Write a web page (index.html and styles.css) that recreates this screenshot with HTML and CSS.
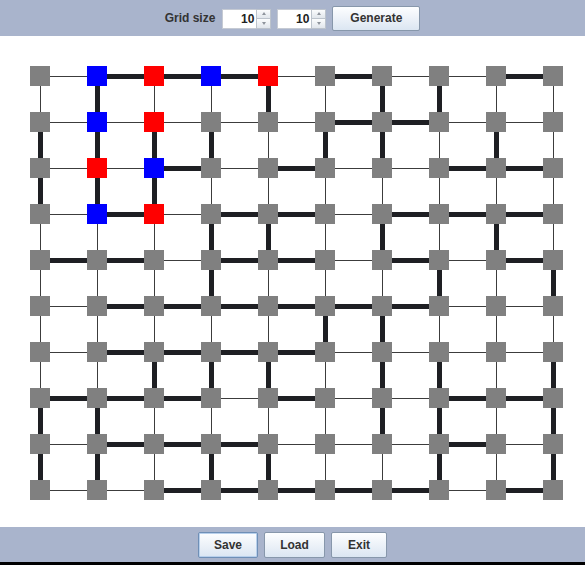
FILE: index.html
```html
<!DOCTYPE html>
<html>
<head>
<meta charset="utf-8">
<link rel="stylesheet" href="styles.css">
</head>
<body>
<div class="app">
  <header class="bar top">
    <span class="label">Grid size</span>
    <div class="spinner">
      <span class="field">10</span>
      <span class="arrows"><span class="arrow up"></span><span class="arrow down"></span></span>
    </div>
    <div class="spinner">
      <span class="field">10</span>
      <span class="arrows"><span class="arrow up"></span><span class="arrow down"></span></span>
    </div>
    <button class="btn btn-generate">Generate</button>
  </header>
  <main class="canvas">
    <svg class="grid" width="585" height="491" viewBox="0 0 585 491">
      <g transform="translate(0.5,0.5)">
        <path class="thin" d="M40 40H553M40 86H553M40 132H553M40 178H553M40 224H553M40 270H553M40 316H553M40 362H553M40 408H553M40 454H553M40 40V454M97 40V454M154 40V454M211 40V454M268 40V454M325 40V454M382 40V454M439 40V454M496 40V454M553 40V454"/>
        <path class="thick" d="M97 40H268M325 40H382M496 40H553M325 86H439M154 132H211M268 132H325M439 132H553M97 178H154M211 178H325M382 178H553M40 224H154M211 224H325M382 224H439M496 224H553M97 270H439M97 316H325M40 362H211M268 362H325M439 362H553M97 408H268M439 408H496M154 454H439M496 454H553M40 86V178M40 362V454M97 40V178M97 362V454M154 86V178M154 316V362M211 86V132M211 178V270M211 316V362M211 408V454M268 40V86M268 178V224M268 316V362M268 408V454M325 86V132M325 270V316M382 40V132M382 178V224M382 270V408M439 40V86M439 224V270M439 316V454M496 86V132M496 178V224M553 224V270M553 316V454"/>
      </g>
      <g class="nodes">
        <rect x="30" y="30" width="20" height="20"/><rect class="blue" x="87" y="30" width="20" height="20"/><rect class="red" x="144" y="30" width="20" height="20"/><rect class="blue" x="201" y="30" width="20" height="20"/><rect class="red" x="258" y="30" width="20" height="20"/><rect x="315" y="30" width="20" height="20"/><rect x="372" y="30" width="20" height="20"/><rect x="429" y="30" width="20" height="20"/><rect x="486" y="30" width="20" height="20"/><rect x="543" y="30" width="20" height="20"/>
        <rect x="30" y="76" width="20" height="20"/><rect class="blue" x="87" y="76" width="20" height="20"/><rect class="red" x="144" y="76" width="20" height="20"/><rect x="201" y="76" width="20" height="20"/><rect x="258" y="76" width="20" height="20"/><rect x="315" y="76" width="20" height="20"/><rect x="372" y="76" width="20" height="20"/><rect x="429" y="76" width="20" height="20"/><rect x="486" y="76" width="20" height="20"/><rect x="543" y="76" width="20" height="20"/>
        <rect x="30" y="122" width="20" height="20"/><rect class="red" x="87" y="122" width="20" height="20"/><rect class="blue" x="144" y="122" width="20" height="20"/><rect x="201" y="122" width="20" height="20"/><rect x="258" y="122" width="20" height="20"/><rect x="315" y="122" width="20" height="20"/><rect x="372" y="122" width="20" height="20"/><rect x="429" y="122" width="20" height="20"/><rect x="486" y="122" width="20" height="20"/><rect x="543" y="122" width="20" height="20"/>
        <rect x="30" y="168" width="20" height="20"/><rect class="blue" x="87" y="168" width="20" height="20"/><rect class="red" x="144" y="168" width="20" height="20"/><rect x="201" y="168" width="20" height="20"/><rect x="258" y="168" width="20" height="20"/><rect x="315" y="168" width="20" height="20"/><rect x="372" y="168" width="20" height="20"/><rect x="429" y="168" width="20" height="20"/><rect x="486" y="168" width="20" height="20"/><rect x="543" y="168" width="20" height="20"/>
        <rect x="30" y="214" width="20" height="20"/><rect x="87" y="214" width="20" height="20"/><rect x="144" y="214" width="20" height="20"/><rect x="201" y="214" width="20" height="20"/><rect x="258" y="214" width="20" height="20"/><rect x="315" y="214" width="20" height="20"/><rect x="372" y="214" width="20" height="20"/><rect x="429" y="214" width="20" height="20"/><rect x="486" y="214" width="20" height="20"/><rect x="543" y="214" width="20" height="20"/>
        <rect x="30" y="260" width="20" height="20"/><rect x="87" y="260" width="20" height="20"/><rect x="144" y="260" width="20" height="20"/><rect x="201" y="260" width="20" height="20"/><rect x="258" y="260" width="20" height="20"/><rect x="315" y="260" width="20" height="20"/><rect x="372" y="260" width="20" height="20"/><rect x="429" y="260" width="20" height="20"/><rect x="486" y="260" width="20" height="20"/><rect x="543" y="260" width="20" height="20"/>
        <rect x="30" y="306" width="20" height="20"/><rect x="87" y="306" width="20" height="20"/><rect x="144" y="306" width="20" height="20"/><rect x="201" y="306" width="20" height="20"/><rect x="258" y="306" width="20" height="20"/><rect x="315" y="306" width="20" height="20"/><rect x="372" y="306" width="20" height="20"/><rect x="429" y="306" width="20" height="20"/><rect x="486" y="306" width="20" height="20"/><rect x="543" y="306" width="20" height="20"/>
        <rect x="30" y="352" width="20" height="20"/><rect x="87" y="352" width="20" height="20"/><rect x="144" y="352" width="20" height="20"/><rect x="201" y="352" width="20" height="20"/><rect x="258" y="352" width="20" height="20"/><rect x="315" y="352" width="20" height="20"/><rect x="372" y="352" width="20" height="20"/><rect x="429" y="352" width="20" height="20"/><rect x="486" y="352" width="20" height="20"/><rect x="543" y="352" width="20" height="20"/>
        <rect x="30" y="398" width="20" height="20"/><rect x="87" y="398" width="20" height="20"/><rect x="144" y="398" width="20" height="20"/><rect x="201" y="398" width="20" height="20"/><rect x="258" y="398" width="20" height="20"/><rect x="315" y="398" width="20" height="20"/><rect x="372" y="398" width="20" height="20"/><rect x="429" y="398" width="20" height="20"/><rect x="486" y="398" width="20" height="20"/><rect x="543" y="398" width="20" height="20"/>
        <rect x="30" y="444" width="20" height="20"/><rect x="87" y="444" width="20" height="20"/><rect x="144" y="444" width="20" height="20"/><rect x="201" y="444" width="20" height="20"/><rect x="258" y="444" width="20" height="20"/><rect x="315" y="444" width="20" height="20"/><rect x="372" y="444" width="20" height="20"/><rect x="429" y="444" width="20" height="20"/><rect x="486" y="444" width="20" height="20"/><rect x="543" y="444" width="20" height="20"/>
      </g>
    </svg>
  </main>
  <footer class="bar bottom">
    <button class="btn btn-save">Save</button>
    <button class="btn btn-load">Load</button>
    <button class="btn btn-exit">Exit</button>
  </footer>
  <div class="edge"></div>
</div>
</body>
</html>
```

FILE: styles.css
```css
html, body {
  margin: 0;
  padding: 0;
  background: #ffffff;
}

body {
  width: 585px;
  height: 565px;
  overflow: hidden;
  font-family: "Liberation Sans", Arial, sans-serif;
  font-size: 12px;
  font-weight: bold;
  color: #333333;
}

.app {
  display: flex;
  flex-direction: column;
  width: 585px;
  height: 565px;
}

.bar {
  display: flex;
  align-items: center;
  justify-content: center;
  gap: 6px;
  background: #a9b4cc;
  flex: none;
}

.top {
  height: 36px;
}

.bottom {
  height: 35px;
}

.label {
  margin-right: 1px;
  line-height: 14px;
}

.spinner {
  display: flex;
  height: 20px;
  margin-top: 1px;
}

.field {
  box-sizing: border-box;
  width: 34px;
  height: 20px;
  background: #ffffff;
  border: 1px solid #c5cad3;
  border-right: none;
  text-align: right;
  padding-right: 2px;
  line-height: 18px;
  color: #222;
}

.arrows {
  display: flex;
  flex-direction: column;
  width: 15px;
  height: 20px;
}

.arrow {
  box-sizing: border-box;
  flex: 1;
  display: flex;
  align-items: center;
  justify-content: center;
  background: linear-gradient(#fbfcfd, #e1e6ec);
  border: 1px solid #bcc3cc;
}

.arrow.down {
  border-top: none;
}

.arrow::after {
  content: "";
  width: 0;
  height: 0;
  border-left: 2.5px solid transparent;
  border-right: 2.5px solid transparent;
}

.arrow.up::after {
  border-bottom: 3px solid #8e949c;
}

.arrow.down::after {
  border-top: 3px solid #8e949c;
}

.btn {
  box-sizing: border-box;
  height: 26px;
  padding: 0;
  font: inherit;
  color: #333333;
  background: linear-gradient(#fdfeff 0%, #eef3f9 45%, #dbe6f2 100%);
  border: 1px solid #8797ab;
  border-radius: 2px;
  cursor: default;
}

.btn-generate {
  width: 88px;
  height: 25px;
}

.btn-save {
  width: 60px;
  border-color: #6f8fb6;
  box-shadow: inset 0 0 0 1px #b8d0ec;
}

.btn-load {
  width: 61px;
}

.btn-exit {
  width: 56px;
}

.canvas {
  flex: none;
  height: 491px;
  background: #ffffff;
}

.grid {
  display: block;
}

.thin {
  fill: none;
  stroke: #3c3c3c;
  stroke-width: 1;
  shape-rendering: crispEdges;
}

.thick {
  fill: none;
  stroke: #1e1f23;
  stroke-width: 5;
  stroke-linecap: butt;
  shape-rendering: crispEdges;
}

.nodes rect {
  fill: #808080;
  shape-rendering: crispEdges;
}

.nodes rect.blue {
  fill: #0000ff;
}

.nodes rect.red {
  fill: #ff0000;
}

.edge {
  flex: none;
  height: 3px;
  background: #000000;
}
```
